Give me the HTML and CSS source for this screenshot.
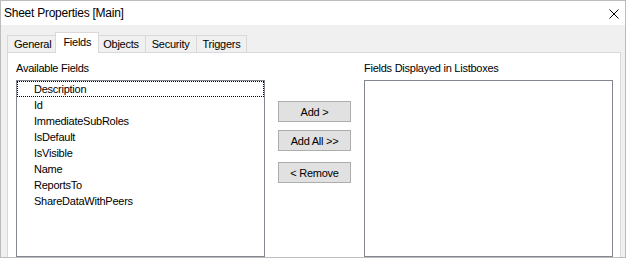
FILE: index.html
```html
<!DOCTYPE html>
<html lang="en">
<head>
    <meta charset="UTF-8">
    <title>Sheet Properties [Main]</title>
    <link rel="stylesheet" href="styles.css">
</head>
<body>

    <!-- Dialog window -->
    <div class="window">
        <div class="title-bar">
            <span class="title">Sheet Properties [Main]</span>
            <svg class="close-btn" width="10" height="10" viewBox="0 0 10 10">
                <path d="M0.5 0.5 L9.5 9.5 M9.5 0.5 L0.5 9.5" stroke="#000" stroke-width="1" fill="none"/>
            </svg>
        </div>

        <div class="dialog-body">
            <div class="tabs">
                <div class="tab">General</div>
                <div class="tab active">Fields</div>
                <div class="tab">Objects</div>
                <div class="tab">Security</div>
                <div class="tab">Triggers</div>
            </div>

            <div class="tab-page">
                <div class="field-column">
                    <div class="field-label">Available Fields</div>
                    <div class="listbox">
                        <div class="list-item focused">Description</div>
                        <div class="list-item">Id</div>
                        <div class="list-item">ImmediateSubRoles</div>
                        <div class="list-item">IsDefault</div>
                        <div class="list-item">IsVisible</div>
                        <div class="list-item">Name</div>
                        <div class="list-item">ReportsTo</div>
                        <div class="list-item">ShareDataWithPeers</div>
                    </div>
                </div>

                <div class="button-column">
                    <button class="move-btn">Add &gt;</button>
                    <button class="move-btn">Add All &gt;&gt;</button>
                    <button class="move-btn remove-btn">&lt; Remove</button>
                </div>

                <div class="field-column">
                    <div class="field-label">Fields Displayed in Listboxes</div>
                    <div class="listbox"></div>
                </div>
            </div>
        </div>
    </div>

</body>
</html>
```

FILE: styles.css
```css
/* Basis */
body {
    margin: 0;
    padding: 0;
    font-family: "Liberation Sans", Arial, sans-serif;
    font-size: 11px;
    letter-spacing: -0.25px;
    color: #000;
}

/* Fenster */
.window {
    width: 626px;
    height: 258px;
    box-sizing: border-box;
    border: 1px solid #bcbcbc;
    background: #f0f0f0;
    display: flex;
    flex-direction: column;
    overflow: hidden;
}

.title-bar {
    height: 24px;
    background: #fff;
    display: flex;
    align-items: center;
    justify-content: space-between;
    padding: 0 6px 0 3px;
    flex-shrink: 0;
}

.title {
    font-size: 12px;
    margin-top: -1px;
}

.close-btn {
    margin-top: 1px;
}

.dialog-body {
    flex: 1;
    display: flex;
    flex-direction: column;
    padding: 7px 4px 0 6px;
    min-height: 0;
}

/* Reiter */
.tabs {
    display: flex;
    align-items: flex-start;
    height: 21px;
    margin-bottom: -1px;
}

.tab {
    height: 17px;
    line-height: 16px;
    margin-top: 3px;
    padding: 0 6px;
    border: 1px solid #d9d9d9;
    border-bottom: none;
    box-sizing: border-box;
    background: #f0f0f0;
}

.tab + .tab {
    margin-left: -1px;
}

.tab.active {
    position: relative;
    z-index: 1;
    height: 21px;
    margin-top: 0;
    margin-left: -3px;
    margin-right: -2px;
    padding: 0 7px;
    line-height: 18px;
    background: #fff;
}

.tab-page {
    flex: 1;
    display: flex;
    background: #fff;
    border: 1px solid #d9d9d9;
    border-bottom: none;
    padding: 7px 7px 0 8px;
    min-height: 0;
}

/* Listen */
.field-column {
    width: 249px;
    display: flex;
    flex-direction: column;
}

.field-label {
    height: 16px;
    line-height: 16px;
    margin-bottom: 4px;
}

.listbox {
    flex: 1;
    border: 1px solid #828790;
    background: #fff;
}

.list-item {
    height: 16px;
    line-height: 15px;
    box-sizing: border-box;
    padding-left: 16px;
    border: 1px solid transparent;
}

.list-item.focused {
    border: 1px dotted #000;
}

/* Buttons */
.button-column {
    width: 73px;
    margin: 0 13px;
    padding-top: 41px;
    display: flex;
    flex-direction: column;
    gap: 8px;
}

.move-btn {
    height: 21px;
    width: 73px;
    padding: 0;
    background: #e1e1e1;
    border: 1px solid #adadad;
    font-family: inherit;
    font-size: 11px;
    letter-spacing: -0.25px;
    color: #000;
}

.remove-btn {
    margin-top: 3px;
}
```
